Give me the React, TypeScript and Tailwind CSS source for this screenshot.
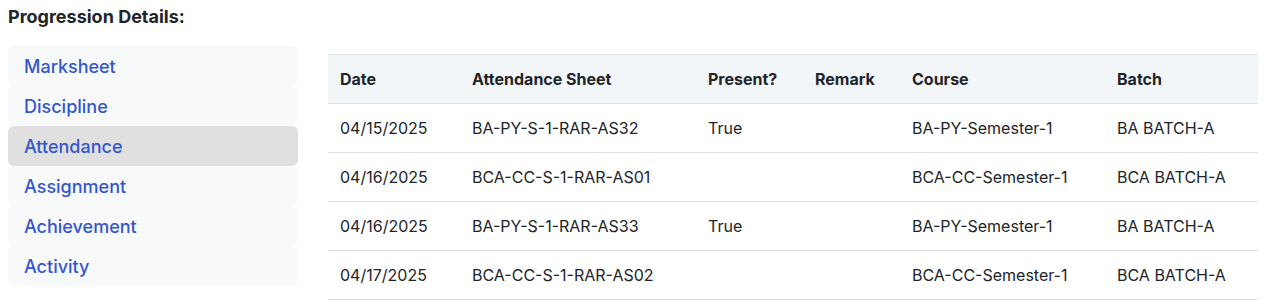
import React from 'react'

const tabs = ['Marksheet', 'Discipline', 'Attendance', 'Assignment', 'Achievement', 'Activity']

const rows = [
  { date: '04/15/2025', sheet: 'BA-PY-S-1-RAR-AS32', present: 'True', remark: '', course: 'BA-PY-Semester-1', batch: 'BA BATCH-A' },
  { date: '04/16/2025', sheet: 'BCA-CC-S-1-RAR-AS01', present: '', remark: '', course: 'BCA-CC-Semester-1', batch: 'BCA BATCH-A' },
  { date: '04/16/2025', sheet: 'BA-PY-S-1-RAR-AS33', present: 'True', remark: '', course: 'BA-PY-Semester-1', batch: 'BA BATCH-A' },
  { date: '04/17/2025', sheet: 'BCA-CC-S-1-RAR-AS02', present: '', remark: '', course: 'BCA-CC-Semester-1', batch: 'BCA BATCH-A' },
]

const cols = ['w-[132px]', 'w-[236px]', 'w-[107px]', 'w-[97px]', 'w-[205px]', '']

export default function App() {
  return (
    <div className="bg-white text-[#212529] font-['Inter','Noto_Sans',sans-serif] px-2 pt-[5px]">
      <h3 className="text-[18px] font-bold leading-[24px]">Progression Details:</h3>

      <div className="flex mt-[17px] gap-[30px]">
        <div className="w-[290px] shrink-0 flex flex-col">
          {tabs.map(t => (
            <div
              key={t}
              className={`h-[40px] flex items-center px-4 rounded-md text-[18px] font-medium text-[#3456cc] ${
                t === 'Attendance' ? 'bg-[#e0e0e0]' : 'bg-[#f7f9fb]'
              }`}
            >
              {t}
            </div>
          ))}
        </div>

        <div className="w-[930px] mt-2">
          <table className="w-full border-collapse text-[16px]">
            <thead>
              <tr className="bg-[#f3f6f9] border-y border-[#dee2e6]">
                {['Date', 'Attendance Sheet', 'Present?', 'Remark', 'Course', 'Batch'].map((h, i) => (
                  <th key={h} className={`h-[49px] px-3 text-left font-bold ${cols[i]}`}>
                    {h}
                  </th>
                ))}
              </tr>
            </thead>
            <tbody>
              {rows.map((r, i) => (
                <tr key={i} className="border-b border-[#dee2e6]">
                  <td className="h-[49px] px-3">{r.date}</td>
                  <td className="px-3">{r.sheet}</td>
                  <td className="px-3">{r.present}</td>
                  <td className="px-3">{r.remark}</td>
                  <td className="px-3">{r.course}</td>
                  <td className="px-3">{r.batch}</td>
                </tr>
              ))}
            </tbody>
          </table>
        </div>
      </div>
    </div>
  )
}
